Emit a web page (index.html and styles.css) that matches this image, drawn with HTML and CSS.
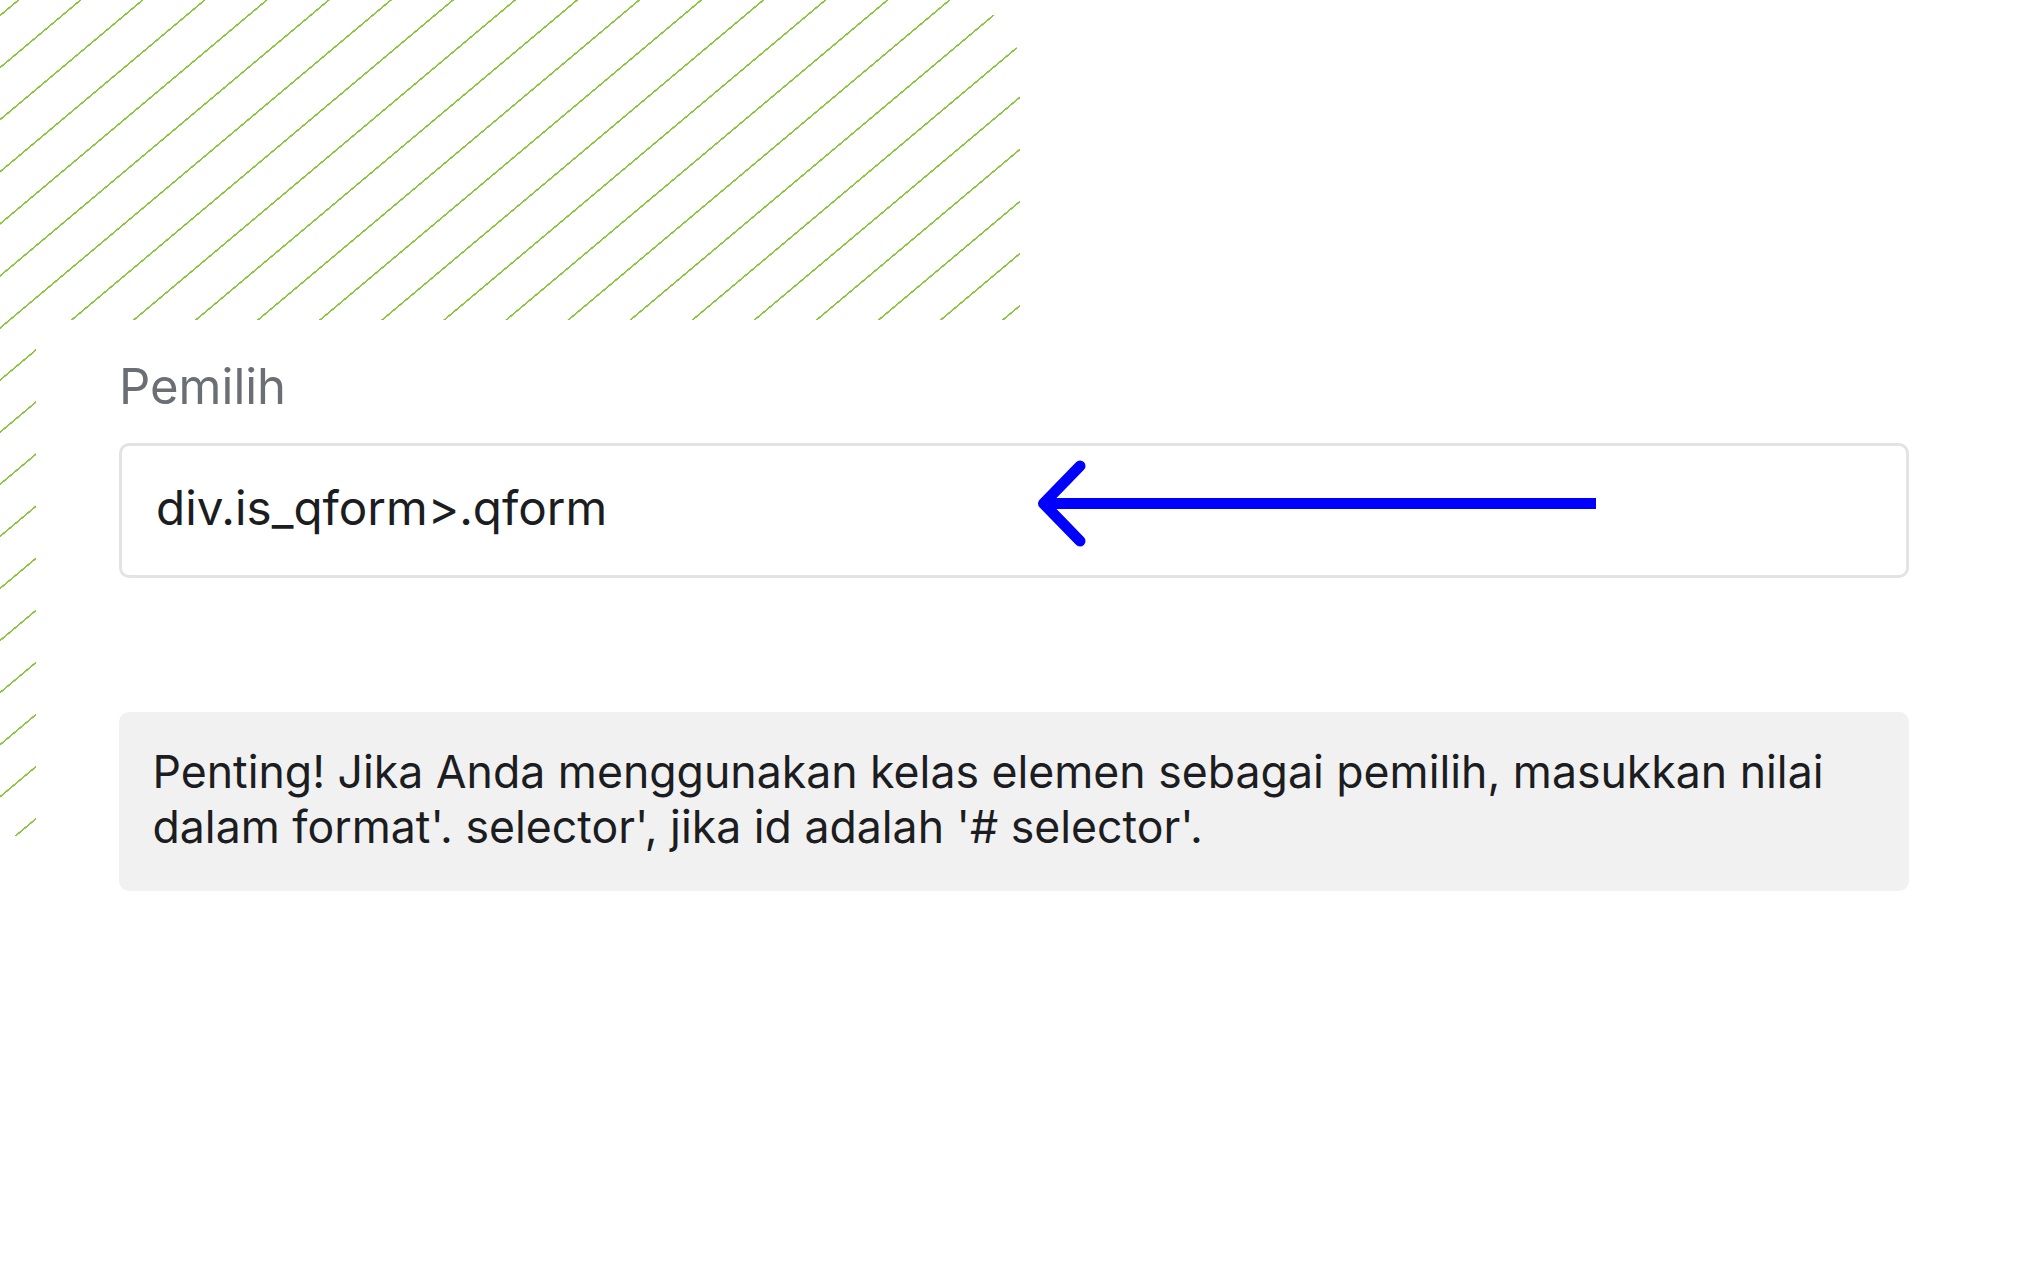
FILE: index.html
```
<html>
    <head>
        <title>Pemilih</title>
        <link rel="stylesheet" href="styles.css">
    </head>
    <body>
        <div class="page">
            <div class="panel">
                <label class="label" for="selector">Pemilih</label>
                <div class="field">
                    <input class="input" type="text" id="selector" value="div.is_qform>.qform" readonly />
                    <svg class="pointer" viewBox="0 0 570 100" width="570" height="100">
                        <path d="M50 11 L13.5 48.5 L50 86" fill="none" stroke="#0000ff" stroke-width="11" stroke-linecap="round" stroke-linejoin="round" />
                        <path d="M13.5 48.5 H566" fill="none" stroke="#0000ff" stroke-width="11" />
                    </svg>
                </div>
                <div class="note">
                    Penting! Jika Anda menggunakan kelas elemen sebagai pemilih, masukkan nilai
                    dalam format'. selector', jika id adalah '# selector'.
                </div>
            </div>
        </div>
    </body>
</html>
```
FILE: styles.css
```
body {
    margin: 0;
    font-family: Inter, "Noto Sans", sans-serif;
    background: #fff;
}

.page {
    min-height: 100vh;
    padding-top: 320px;
    box-sizing: border-box;
    background:
        radial-gradient(circle at 0 100%, transparent 70px, #fff 70.5px) 950px 0 / 70px 70px no-repeat,
        repeating-linear-gradient(140deg, transparent 0 11px, #8cc63f 11.2px 12.6px, transparent 12.8px 39.9px) 0 0 / 1020px 836px no-repeat,
        #fff;
}

.panel {
    margin-left: 36px;
    padding: 38px 0 0 83px;
    background: #fff;
    min-height: 800px;
}

.label {
    display: block;
    font-size: 49px;
    line-height: 58px;
    color: #6b6f75;
    margin-bottom: 27px;
}

.field {
    position: relative;
    width: 1790px;
}

.input {
    display: block;
    width: 100%;
    height: 135px;
    box-sizing: border-box;
    border: 3px solid #e3e3e3;
    border-radius: 10px;
    padding: 0 34px 6px 34px;
    font-family: Inter, "Noto Sans", sans-serif;
    font-size: 47.6px;
    color: #1b1d21;
    background: #fff;
    outline: none;
}

.pointer {
    position: absolute;
    left: 911px;
    top: 12px;
}

.note {
    width: 1790px;
    box-sizing: border-box;
    margin-top: 134px;
    padding: 33px 30px 36px 33.5px;
    background: #f1f1f1;
    border-radius: 10px;
    font-size: 44.6px;
    line-height: 55px;
    color: #1b1d21;
}
```
